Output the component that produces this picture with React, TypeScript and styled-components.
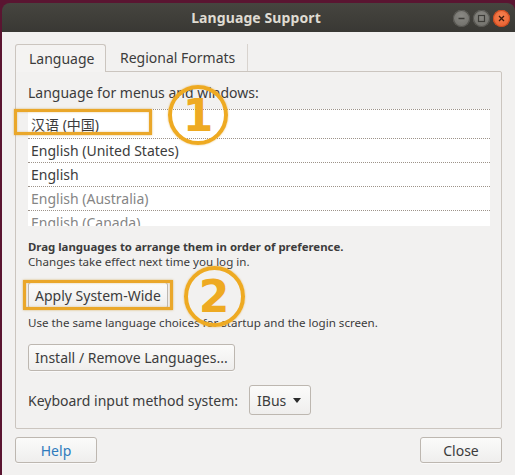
import React from "react";
import styled, { createGlobalStyle } from "styled-components";

const Global = createGlobalStyle`
  html, body { margin: 0; padding: 0; background: #5a1531; overflow: hidden; }
  body { font-family: "Noto Sans", "Noto Sans CJK SC", sans-serif; color: #3c3c3c; }
  * { box-sizing: border-box; }
`;

const Stage = styled.div`
  position: relative;
  width: 515px;
  height: 475px;
  padding: 3px 0 0 2px;
  overflow: hidden;
`;

const Window = styled.div`
  width: 513px;
  height: 472px;
  display: flex;
  flex-direction: column;
  border-radius: 8px 8px 0 0;
  overflow: hidden;
`;

const TitleBar = styled.div`
  height: 29px;
  flex: none;
  display: grid;
  grid-template-columns: 1fr auto 1fr;
  align-items: center;
  background: linear-gradient(#46453f, #393834);
  padding-right: 5px;
`;

const Title = styled.div`
  grid-column: 2;
  font-family: "Noto Sans", sans-serif;
  font-weight: 700;
  font-size: 14px;
  color: #dfdbd2;
  letter-spacing: 0.1px;
`;

const Controls = styled.div`
  grid-column: 3;
  justify-self: end;
  display: flex;
  gap: 3px;
  margin-top: 1px;
`;

const Ctl = styled.div<{ $close?: boolean }>`
  width: 17px;
  height: 17px;
  border-radius: 50%;
  display: flex;
  align-items: center;
  justify-content: center;
  background: ${(p) =>
    p.$close
      ? "radial-gradient(circle at 50% 35%, #f5814f, #e5582a)"
      : "radial-gradient(circle at 50% 35%, #8a8984, #6a6964)"};
  box-shadow: inset 0 0 0 1px ${(p) => (p.$close ? "#c94a1f" : "#55544f")};
`;

const Body = styled.div`
  flex: 1;
  background: #f2f1f0;
  padding: 12px 13px 12px 13px;
  display: flex;
  flex-direction: column;
`;

const Notebook = styled.div`
  flex: 1;
  display: flex;
  flex-direction: column;
`;

const Tabs = styled.div`
  display: flex;
  height: 27px;
  flex: none;
  position: relative;
  z-index: 1;
`;

const Tab = styled.div<{ $active?: boolean }>`
  height: ${(p) => (p.$active ? "28px" : "27px")};
  display: flex;
  align-items: center;
  font-size: 14px;
  padding: ${(p) => (p.$active ? "0 13px" : "0 12px 0 14px")};
  width: ${(p) => (p.$active ? "91px" : "auto")};
  background: ${(p) => (p.$active ? "#f4f3f2" : "transparent")};
  border: ${(p) => (p.$active ? "1px solid #cbc5bf" : "none")};
  border-bottom: none;
  border-right: 1px solid ${(p) => (p.$active ? "#cbc5bf" : "#d8d3ce")};
  border-radius: ${(p) => (p.$active ? "3px 3px 0 0" : "0")};
  color: #3c3c3c;
`;

const Page = styled.div`
  flex: 1;
  border: 1px solid #cbc5bf;
  border-radius: 0 2px 2px 2px;
  padding: 12px 11px 0 12px;
  display: flex;
  flex-direction: column;
`;

const Label = styled.div`
  font-size: 14px;
  line-height: 18px;
  color: #3c3c3c;
`;

const List = styled.div`
  margin-top: 6px;
  height: 118px;
  background: #fff;
  overflow: hidden;
  padding-top: 1px;
  background-clip: content-box;
`;

const Row = styled.div<{ $muted?: boolean; $tall?: boolean }>`
  height: ${(p) => (p.$tall ? "29px" : "24px")};
  border-top: 1px dotted #9d938a;
  display: flex;
  align-items: center;
  padding-left: 3px;
  font-size: 14px;
  background: #fff;
  color: ${(p) => (p.$muted ? "#858585" : "#3c3c3c")};
`;

const Note = styled.div<{ $bold?: boolean; $mt?: number }>`
  font-size: ${(p) => (p.$bold ? "11.4px" : "11.6px")};
  line-height: 15px;
  font-weight: ${(p) => (p.$bold ? 700 : 400)};
  margin-top: ${(p) => p.$mt ?? 0}px;
  color: #3c3c3c;
  white-space: nowrap;
`;

const Button = styled.button<{ $w?: number; $h?: number; $mt?: number; $link?: boolean }>`
  font-family: "Noto Sans", sans-serif;
  font-size: 14px;
  height: ${(p) => p.$h ?? 27}px;
  width: ${(p) => (p.$w ? `${p.$w}px` : "auto")};
  margin-top: ${(p) => p.$mt ?? 0}px;
  align-self: flex-start;
  padding: 0 6px;
  border: 1px solid #bdb7b0;
  border-radius: 3px;
  background: linear-gradient(#fbfbfa, #efeeed);
  color: ${(p) => (p.$link ? "#2f7bbd" : "#3c3c3c")};
  display: flex;
  align-items: center;
  justify-content: ${(p) => (p.$w ? "center" : "flex-start")};
  box-shadow: 0 1px 0 rgba(255, 255, 255, 0.6);
`;

const KeyRow = styled.div`
  margin-top: 14px;
  display: flex;
  align-items: center;
  gap: 11px;
  font-size: 14px;
`;

const Combo = styled.div`
  height: 30px;
  width: 62px;
  border: 1px solid #bdb7b0;
  border-radius: 3px;
  background: linear-gradient(#fbfbfa, #efeeed);
  display: flex;
  align-items: center;
  justify-content: space-between;
  padding: 0 9px 0 7px;
  font-size: 14px;
  color: #3c3c3c;
`;

const Caret = styled.span`
  width: 0;
  height: 0;
  border-left: 4.5px solid transparent;
  border-right: 4.5px solid transparent;
  border-top: 5px solid #2b2b2b;
`;

const Footer = styled.div`
  margin-top: 8px;
  height: 26px;
  display: flex;
  justify-content: space-between;
  flex: none;
`;

const Mark = styled.div<{ $x: number; $y: number; $w: number; $h: number }>`
  position: absolute;
  left: ${(p) => p.$x}px;
  top: ${(p) => p.$y}px;
  width: ${(p) => p.$w}px;
  height: ${(p) => p.$h}px;
  border: 3px solid #eaa72a;
  box-shadow: 0 0 2px rgba(200, 140, 20, 0.6), inset 0 0 2px rgba(200, 140, 20, 0.5);
  pointer-events: none;
`;

const Badge = styled.div<{ $x: number; $y: number; $d: number }>`
  position: absolute;
  left: ${(p) => p.$x - p.$d / 2}px;
  top: ${(p) => p.$y - p.$d / 2}px;
  width: ${(p) => p.$d}px;
  height: ${(p) => p.$d}px;
  border-radius: 50%;
  border: 4px solid #eeaa22;
  box-shadow: 0 0 2px rgba(220, 150, 20, 0.6);
  display: flex;
  align-items: center;
  justify-content: center;
  font-family: "DejaVu Sans", sans-serif;
  font-weight: 700;
  font-size: 44px;
  line-height: 1;
  color: #eeaa22;
  padding-top: 2px;
`;

export default function App() {
  return (
    <>
      <Global />
      <Stage>
        <Window>
          <TitleBar>
            <Title>Language Support</Title>
            <Controls>
              <Ctl>
                <svg width="9" height="9" viewBox="0 0 9 9">
                  <path d="M1.5 4.5h6" stroke="#3d3c38" strokeWidth="1.4" />
                </svg>
              </Ctl>
              <Ctl>
                <svg width="9" height="9" viewBox="0 0 9 9">
                  <rect x="1.5" y="1.5" width="6" height="6" fill="none" stroke="#3d3c38" strokeWidth="1.2" />
                </svg>
              </Ctl>
              <Ctl $close>
                <svg width="9" height="9" viewBox="0 0 9 9">
                  <path d="M2 2l5 5M7 2l-5 5" stroke="#3a1a0e" strokeWidth="1.3" />
                </svg>
              </Ctl>
            </Controls>
          </TitleBar>
          <Body>
            <Notebook>
              <Tabs>
                <Tab $active>Language</Tab>
                <Tab>Regional Formats</Tab>
              </Tabs>
              <Page>
                <Label>Language for menus and windows:</Label>
                <List>
                  <Row $tall>汉语 (中国)</Row>
                  <Row>English (United States)</Row>
                  <Row>English</Row>
                  <Row $muted>English (Australia)</Row>
                  <Row $muted>English (Canada)</Row>
                </List>
                <Note $bold $mt={13}>
                  Drag languages to arrange them in order of preference.
                </Note>
                <Note>Changes take effect next time you log in.</Note>
                <Button $mt={13}>Apply System-Wide</Button>
                <Note $mt={6}>Use the same language choices for startup and the login screen.</Note>
                <Button $mt={14}>Install / Remove Languages...</Button>
                <KeyRow>
                  Keyboard input method system:
                  <Combo>
                    IBus
                    <Caret />
                  </Combo>
                </KeyRow>
              </Page>
            </Notebook>
            <Footer>
              <Button $w={82} $h={26} $link>
                Help
              </Button>
              <Button $w={82} $h={26}>
                Close
              </Button>
            </Footer>
          </Body>
        </Window>
        <Mark $x={14} $y={109} $w={138} $h={26} />
        <Mark $x={23} $y={280} $w={150} $h={30} />
        <Badge $x={198} $y={115} $d={60}>1</Badge>
        <Badge $x={214} $y={296} $d={61}>2</Badge>
      </Stage>
    </>
  );
}
